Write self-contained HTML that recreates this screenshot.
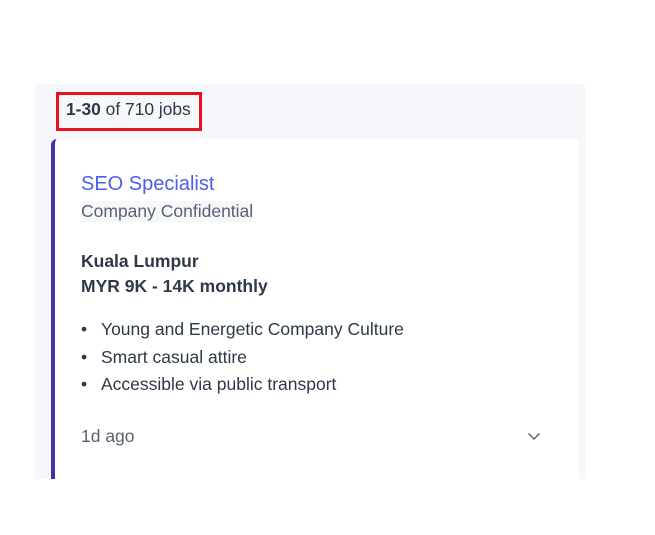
<!DOCTYPE html>
<html><head><style>
body{margin:0;width:655px;height:535px;background:#fff;font-family:"Liberation Sans",sans-serif;position:relative;overflow:hidden}
.panel{position:absolute;left:35px;top:84px;width:550px;height:395px;background:#f6f7fb}
.red{position:absolute;left:56px;top:92px;width:140px;height:33px;border:3px solid #e8121e}
.count{position:absolute;left:66px;top:99px;font-size:17.4px;color:#2e3849}
.card{position:absolute;left:51px;top:139px;width:524px;height:340px;background:#fff;border-left:4px solid #4a2fa6;border-top-left-radius:6px}
.t{position:absolute;white-space:nowrap;font-size:17.5px}
</style></head><body>
<div class="panel"></div>
<div class="red"></div>
<div class="count"><b>1-30</b> of 710 jobs</div>
<div class="card"></div>
<div class="t" style="left:81px;top:173px;font-size:20px;color:#4f5ee8">SEO Specialist</div>
<div class="t" style="left:81px;top:201px;color:#5a6172;background:#f6f7fb">Company Confidential</div>
<div class="t" style="left:81px;top:251px;font-weight:bold;color:#2e3849">Kuala Lumpur</div>
<div class="t" style="left:81px;top:276px;font-weight:bold;color:#2e3849">MYR 9K - 14K monthly</div>
<div class="t" style="left:81px;top:319px;color:#2e3849">•<span style="position:absolute;left:20px">Young and Energetic Company Culture</span></div>
<div class="t" style="left:81px;top:347px;color:#2e3849">•<span style="position:absolute;left:20px">Smart casual attire</span></div>
<div class="t" style="left:81px;top:374px;color:#2e3849">•<span style="position:absolute;left:20px">Accessible via public transport</span></div>
<div class="t" style="left:81px;top:426px;color:#5a6172">1d ago</div>
<svg style="position:absolute;left:527px;top:432px" width="14" height="9" viewBox="0 0 14 9"><path d="M1.5 1.5 L7 7 L12.5 1.5" fill="none" stroke="#5a6172" stroke-width="1.5"/></svg>
</body></html>
